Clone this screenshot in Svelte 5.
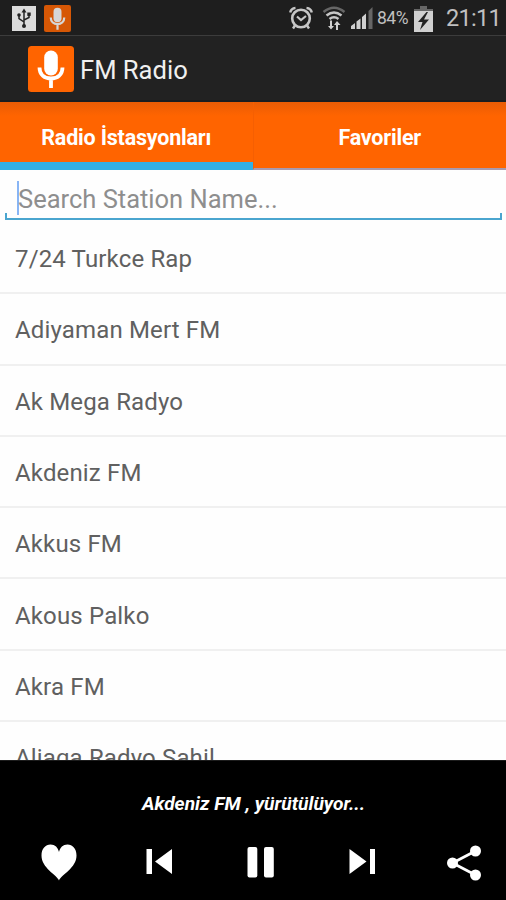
<script>
	const tabs = [
		{ id: "stations", label: "Radio İstasyonları" },
		{ id: "favorites", label: "Favoriler" },
	];

	const stations = [
		"7/24 Turkce Rap",
		"Adiyaman Mert FM",
		"Ak Mega Radyo",
		"Akdeniz FM",
		"Akkus FM",
		"Akous Palko",
		"Akra FM",
		"Aliaga Radyo Sahil",
	];

	let activeTab = $state("stations");
	let query = $state("");
	let current = $state("Akdeniz FM");
	let playing = $state(true);

	let visible = $derived(
		stations.filter((s) => s.toLowerCase().includes(query.toLowerCase()))
	);
</script>

{#snippet mic(size)}
	<svg class="mic" width={size} height={size} viewBox="0 0 46 46">
		<rect width="46" height="46" rx="3.5" fill="#ff6400" />
		<rect x="16.2" y="4.5" width="13.6" height="25" rx="6.8" fill="#fff" />
		<path
			d="M11.5 21.5c0 7.5 5.3 11 11.5 11s11.5-3.5 11.5-11M23 33v9"
			fill="none"
			stroke="#fff"
			stroke-width="3.8"
		/>
	</svg>
{/snippet}

<div class="screen">
	<div class="status-bar">
		<svg class="usb" width="24" height="25" viewBox="0 0 24 25">
			<rect width="24" height="25" fill="#dcdcdc" />
			<path d="M12 4v16M12 16l-5-3.5V9M12 14l5-2.5V8" fill="none" stroke="#222" stroke-width="1.5" />
			<path d="M12 2.500l2.500 4h-5z" fill="#222" />
			<circle cx="12" cy="20" r="2" fill="#222" />
			<circle cx="7" cy="9" r="1.8" fill="#222" />
			<rect x="15.3" y="6.5" width="3.4" height="3.4" fill="#222" />
		</svg>
		<span class="notification">{@render mic(27)}</span>
		<span class="spacer"></span>
		<svg class="alarm" width="24" height="24" viewBox="0 0 24 24">
			<g fill="none" stroke="#c6c6c6">
				<circle cx="12" cy="12.5" r="8.8" stroke-width="2.6" />
				<path d="M8 10.500l4 3.500 5-4" stroke-width="2.2" />
				<path d="M1.200 6.500Q2 2.500 6.500 2M22.800 6.500Q22 2.500 17.500 2M6 19.500l-2 3M18 19.500l2 3" stroke-width="2.4" />
			</g>
		</svg>
		<svg class="wifi" width="24" height="26" viewBox="0 0 24 26">
			<g fill="none">
				<path d="M1.500 7Q12-1.500 22.500 7" stroke="#666" stroke-width="2.5" />
				<path d="M4.500 10.500q7.500-6 15 0M7.500 14q4.500-3.500 9 0" stroke="#c6c6c6" stroke-width="2.5" />
			</g>
			<path d="M8 15.500h2V21h2l-3 3.500L6 21h2zM14 25h2v-5h2.500L15 16l-3 4h2z" fill="#d0d0d0" />
		</svg>
		<svg class="signal" width="24" height="24" viewBox="0 0 24 24">
			<path d="M1 20l4-3v6H1zM6.500 15.500l4-3V23h-4zM12 11l4-3.500V23h-4z" fill="#cfcfcf" />
			<path d="M18.500 5l4-4v22h-4z" fill="#666" />
		</svg>
		<span class="percent">84%</span>
		<svg class="battery" width="19" height="27" viewBox="0 0 19 27">
			<path d="M6 1h7v3h6v4H0V4h6z" fill="#666" />
			<path d="M0 6h19v21H0z" fill="#d0d0d0" />
			<path d="M12.500 7L4 17h4.500L6 25l9-10.500h-5L14 7z" fill="#222" />
		</svg>
		<span class="clock">21:11</span>
	</div>

	<header class="app-bar">
		{@render mic(46)}
		<h1>FM Radio</h1>
	</header>

	<nav class="tabs">
		{#each tabs as tab (tab.id)}
			<button
				class="tab"
				class:active={activeTab === tab.id}
				onclick={() => (activeTab = tab.id)}
				type="button"
			>
				<span>{tab.label}</span>
			</button>
		{/each}
	</nav>

	<div class="search">
		<span class="caret"></span>
		<input type="text" placeholder="Search Station Name..." bind:value={query} />
	</div>

	<ul class="stations">
		{#each visible as station (station)}
			<li>
				<button class="station" onclick={() => (current = station)} type="button">
					{station}
				</button>
			</li>
		{/each}
	</ul>

	<footer class="player">
		<p class="now-playing">{current} , yürütülüyor...</p>
		<div class="controls">
			<button type="button" aria-label="Favorite">
				<svg width="40" height="40" viewBox="0 0 40 40">
					<path
						d="M20 38.500C17.500 32.500 2.500 26 2.500 13.500 2.500 6.500 6.500 2.500 11.500 2.500c4.500 0 7.500 3 8.500 7.500 1-4.500 4-7.500 8.500-7.500 5 0 9 4 9 11C37.500 26 22.500 32.500 20 38.500z"
					/>
				</svg>
			</button>
			<button type="button" aria-label="Previous">
				<svg width="40" height="40" viewBox="0 0 40 40">
					<path d="M6.500 7h5.500v25H6.500zM32 7v25L15 19.500z" />
				</svg>
			</button>
			<button type="button" aria-label="Play or pause" onclick={() => (playing = !playing)}>
				<svg width="40" height="40" viewBox="0 0 40 40">
					{#if playing}
						<rect x="5.5" y="5" width="9.8" height="30.5" rx="2" />
						<rect x="22" y="5" width="9.8" height="30.5" rx="2" />
					{:else}
						<path d="M9 5v30l24-15z" />
					{/if}
				</svg>
			</button>
			<button type="button" aria-label="Next">
				<svg width="40" height="40" viewBox="0 0 40 40">
					<path d="M6.500 7v25l17-12.500zM27 7h5v25h-5z" />
				</svg>
			</button>
			<button type="button" aria-label="Share">
				<svg width="40" height="40" viewBox="0 0 40 40">
					<path d="M31.500 9L8.500 21l23 12" fill="none" stroke="#fff" stroke-width="2.8" />
					<circle cx="31.5" cy="9" r="5.5" />
					<circle cx="8.5" cy="21" r="5.5" />
					<circle cx="31.5" cy="33" r="5.5" />
				</svg>
			</button>
		</div>
	</footer>
</div>

<style>
	:global(body) {
		margin: 0;
		background: #000;
	}

	.screen {
		display: flex;
		flex-direction: column;
		width: 506px;
		height: 900px;
		overflow: hidden;
		background: #fefefe;
		font-family: Roboto, "Noto Sans", sans-serif;
	}

	svg {
		display: block;
		flex: none;
	}

	button {
		margin: 0;
		padding: 0;
		border: none;
		background: none;
		font-family: inherit;
		cursor: pointer;
	}

	.status-bar {
		display: flex;
		align-items: center;
		box-sizing: border-box;
		flex: none;
		height: 36px;
		padding: 1px 6px 0 12px;
		border-bottom: 1px solid #3c3c3c;
		background: #1e1e1e;
		color: #c0c0c0;
	}

	.notification {
		margin-left: 8px;
		opacity: 0.82;
	}

	.spacer {
		flex: 1;
	}

	.wifi {
		margin-left: 9px;
	}

	.signal {
		margin-left: 4px;
	}

	.percent {
		width: 31px;
		margin-left: 3px;
		font-size: 17.5px;
		letter-spacing: -0.5px;
	}

	.battery {
		margin-left: 6px;
	}

	.clock {
		width: 54px;
		margin-left: 13px;
		font-size: 23.5px;
		letter-spacing: -0.7px;
	}

	.app-bar {
		display: flex;
		align-items: center;
		box-sizing: border-box;
		flex: none;
		height: 66px;
		padding: 2px 28px 0;
		border-bottom: 2px solid #191d20;
		background: #222;
	}

	h1 {
		margin: 2px 0 0 6px;
		color: #f0f0f0;
		font-size: 25.6px;
		font-weight: 400;
	}

	.tabs {
		display: flex;
		box-sizing: border-box;
		flex: none;
		height: 68px;
		background: linear-gradient(#e85c05, #ff6400 14px);
	}

	.tab {
		flex: 1;
		box-sizing: border-box;
		padding-top: 4px;
		border-bottom: 2px solid #a99aae;
		color: #fff;
		font-size: 21.5px;
		font-weight: 700;
		letter-spacing: -0.2px;
	}

	.tab + .tab {
		border-left: 1px solid #f55f02;
	}

	.tab.active {
		padding-top: 10px;
		border-bottom: 8px solid #33b0e3;
	}

	.search {
		display: flex;
		align-items: center;
		box-sizing: border-box;
		flex: none;
		height: 50px;
		margin: 0 4px 3px 5px;
		padding: 7px 12px 0;
		border-bottom: 2px solid #4aa5cf;
		background:
			linear-gradient(#4aa5cf, #4aa5cf) left bottom / 2px 5px no-repeat,
			linear-gradient(#4aa5cf, #4aa5cf) right bottom / 2px 5px no-repeat;
	}

	.caret {
		width: 2px;
		height: 34px;
		margin-right: -1px;
		background: #88b5f5;
	}

	input {
		flex: 1;
		min-width: 0;
		padding: 2px 0 0;
		border: none;
		outline: none;
		background: none;
		color: #444;
		font-family: inherit;
		font-size: 25.5px;
	}

	input::placeholder {
		color: #8e8e8e;
		opacity: 1;
	}

	.stations {
		flex: 1;
		min-height: 0;
		margin: 0;
		padding: 0;
		overflow: hidden;
		list-style: none;
	}

	li {
		box-sizing: border-box;
		height: 71.3px;
		border-bottom: 2px solid #f0f0f0;
	}

	.station {
		width: 100%;
		height: 100%;
		padding: 3px 15px 0;
		color: #606060;
		font-size: 24px;
		letter-spacing: 0.15px;
		text-align: left;
	}

	.player {
		box-sizing: border-box;
		flex: none;
		height: 140px;
		border-top: 1px solid #1c1c1c;
		background: #000;
	}

	.now-playing {
		margin: 0;
		padding: 31px 0 0 1px;
		color: #fff;
		font-size: 19.2px;
		font-style: italic;
		font-weight: 700;
		line-height: 24px;
		text-align: center;
	}

	.controls {
		display: flex;
		justify-content: space-between;
		padding: 26px 22px 0 39px;
	}

	.controls svg {
		fill: #fff;
	}
</style>
